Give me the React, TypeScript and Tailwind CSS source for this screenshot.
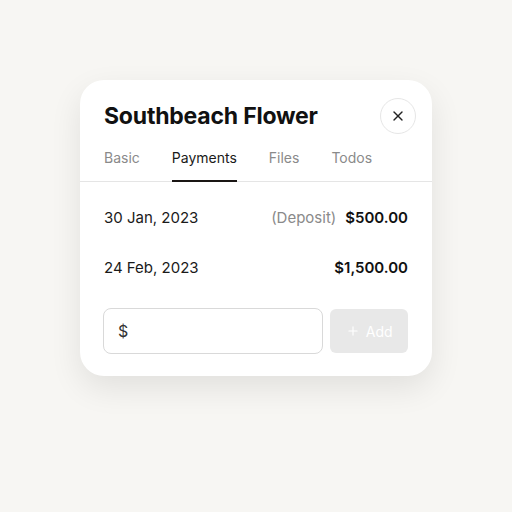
import { X, Plus } from 'lucide-react'

export default function App() {
  const tabs = ['Basic', 'Payments', 'Files', 'Todos']
  const payments = [
    { date: '30 Jan, 2023', note: '(Deposit)', amount: '$500.00' },
    { date: '24 Feb, 2023', note: '', amount: '$1,500.00' },
  ]

  return (
    <div className="w-[512px] h-[512px] bg-[#f7f6f3] pt-[80px] pl-[80px] font-['Inter',sans-serif]">
      <div className="w-[352px] h-[296px] rounded-[24px] bg-white shadow-[0_12px_32px_rgba(0,0,0,0.09)]">
        <div className="flex items-center justify-between pl-6 pr-4 pt-[18px]">
          <h1 className="text-[23px] font-bold text-[#111] tracking-[-0.2px]">Southbeach Flower</h1>
          <button className="w-9 h-9 rounded-full border border-[#e6e6e6] flex items-center justify-center text-[#222]">
            <X className="w-4 h-4" strokeWidth={2} />
          </button>
        </div>

        <div className="flex gap-[32px] px-6 mt-[13px] border-b border-[#e5e5e5]">
          {tabs.map((t) => (
            <div
              key={t}
              className={
                t === 'Payments'
                  ? 'pb-[12px] text-[14px] text-[#1a1a1a] border-b-2 border-[#1a1614] -mb-px'
                  : 'pb-[12px] text-[14px] text-[#8a8a8a]'
              }
            >
              {t}
            </div>
          ))}
        </div>

        <div className="px-6 pt-[11px]">
          {payments.map((p) => (
            <div key={p.date} className="flex items-center justify-between h-[50px] text-[15px]">
              <span className="text-[#1a1a1a]">{p.date}</span>
              <div className="flex items-center gap-[9px]">
                {p.note && <span className="text-[#8a8a8a]">{p.note}</span>}
                <span className="font-semibold text-[#111]">{p.amount}</span>
              </div>
            </div>
          ))}

          <div className="flex gap-[7px] mt-[15px] -ml-px">
            <div className="w-[221px] h-[46px] rounded-[8px] border border-[#d9d9d9] flex items-center px-[14px] text-[16px] text-[#333]">
              $
            </div>
            <button className="w-[78px] h-[44px] mt-px rounded-[6px] bg-[#e8e8e8] flex items-center justify-center gap-[6px] text-[14px] text-white">
              <Plus className="w-[14px] h-[14px]" strokeWidth={2} />
              Add
            </button>
          </div>
        </div>
      </div>
    </div>
  )
}
